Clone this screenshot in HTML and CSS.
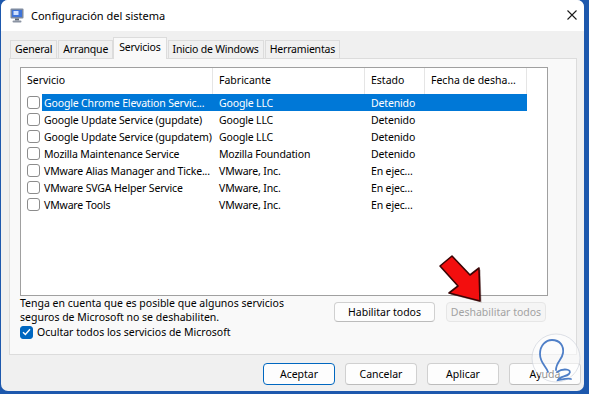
FILE: index.html
```html
<!doctype html>
<html>

<head>
  <title>Configuración del sistema</title>
  <meta http-equiv="Content-Type" content="text/html; charset=UTF-8">
  <link rel="stylesheet" href="styles.css">
</head>

<body>
  <div class="window">
    <div class="titlebar">
      <svg class="app-icon" width="14" height="15" viewBox="0 0 14 15">
        <rect x="0.5" y="0.5" width="13" height="10" rx="1" fill="#7d8aa0" />
        <rect x="2" y="2" width="10" height="7" fill="#3f74d8" />
        <rect x="3.5" y="3" width="5" height="4" fill="#cfe0ff" />
        <rect x="5" y="10.5" width="4" height="2" fill="#5d6778" />
        <rect x="2.5" y="12.5" width="9" height="2" rx="1" fill="#8b94a3" />
      </svg>
      <span class="title">Configuración del sistema</span>
      <svg class="close" width="10" height="10" viewBox="0 0 10 10">
        <path d="M0.5 0.5 L9.5 9.5 M9.5 0.5 L0.5 9.5" stroke="#1b1b1b" stroke-width="1.1" />
      </svg>
    </div>

    <div class="tabs">
      <div class="tab">General</div>
      <div class="tab">Arranque</div>
      <div class="tab active">Servicios</div>
      <div class="tab">Inicio de Windows</div>
      <div class="tab">Herramientas</div>
    </div>

    <div class="panel">
      <div class="list">
        <div class="list-head">
          <div class="hcell c-first">Servicio</div>
          <div class="hcell c-fab">Fabricante</div>
          <div class="hcell c-est">Estado</div>
          <div class="hcell c-fecha">Fecha de desha...</div>
        </div>
        <div class="row selected">
          <div class="c-chk"><span class="box"></span></div>
          <div class="cell c-srv">Google Chrome Elevation Servic...</div>
          <div class="cell c-fab">Google LLC</div>
          <div class="cell c-est">Detenido</div>
          <div class="cell c-fecha"></div>
        </div>
        <div class="row">
          <div class="c-chk"><span class="box"></span></div>
          <div class="cell c-srv">Google Update Service (gupdate)</div>
          <div class="cell c-fab">Google LLC</div>
          <div class="cell c-est">Detenido</div>
          <div class="cell c-fecha"></div>
        </div>
        <div class="row">
          <div class="c-chk"><span class="box"></span></div>
          <div class="cell c-srv">Google Update Service (gupdatem)</div>
          <div class="cell c-fab">Google LLC</div>
          <div class="cell c-est">Detenido</div>
          <div class="cell c-fecha"></div>
        </div>
        <div class="row">
          <div class="c-chk"><span class="box"></span></div>
          <div class="cell c-srv">Mozilla Maintenance Service</div>
          <div class="cell c-fab">Mozilla Foundation</div>
          <div class="cell c-est">Detenido</div>
          <div class="cell c-fecha"></div>
        </div>
        <div class="row">
          <div class="c-chk"><span class="box"></span></div>
          <div class="cell c-srv">VMware Alias Manager and Ticke...</div>
          <div class="cell c-fab">VMware, Inc.</div>
          <div class="cell c-est">En ejec...</div>
          <div class="cell c-fecha"></div>
        </div>
        <div class="row">
          <div class="c-chk"><span class="box"></span></div>
          <div class="cell c-srv">VMware SVGA Helper Service</div>
          <div class="cell c-fab">VMware, Inc.</div>
          <div class="cell c-est">En ejec...</div>
          <div class="cell c-fecha"></div>
        </div>
        <div class="row">
          <div class="c-chk"><span class="box"></span></div>
          <div class="cell c-srv">VMware Tools</div>
          <div class="cell c-fab">VMware, Inc.</div>
          <div class="cell c-est">En ejec...</div>
          <div class="cell c-fecha"></div>
        </div>
      </div>

      <div class="below">
        <div class="notes">
          <p>Tenga en cuenta que es posible que algunos servicios<br>seguros de Microsoft no se deshabiliten.</p>
          <label class="hide-ms">
            <span class="box checked">
              <svg width="9" height="8" viewBox="0 0 9 8">
                <path d="M1 4.2 L3.4 6.5 L8 1.3" fill="none" stroke="#fff" stroke-width="1.4" />
              </svg>
            </span>
            Ocultar todos los servicios de Microsoft
          </label>
        </div>
        <div class="actions">
          <button class="btn wide">Habilitar todos</button>
          <button class="btn wide" disabled>Deshabilitar todos</button>
        </div>
      </div>
    </div>

    <div class="footer">
      <button class="btn default">Aceptar</button>
      <button class="btn">Cancelar</button>
      <button class="btn">Aplicar</button>
      <button class="btn">Ayuda</button>
    </div>
  </div>

  <!-- red pointer drawn over the dialog -->
  <svg class="arrow" width="52" height="58" viewBox="0 0 52 58">
    <polygon points="16,6 34,25 43,18 44,51 13,43 22,36 4,16" fill="#2a0000" transform="translate(1.5,1.5)" opacity="0.35" />
    <polygon points="16,6 34,25 43,18 44,51 13,43 22,36 4,16" fill="#f30e0e" stroke="#3a0505" stroke-width="1.6" stroke-linejoin="round" />
  </svg>

  <!-- watermark -->
  <svg class="mark" width="50" height="52" viewBox="0 0 50 52">
    <circle cx="25" cy="26" r="24" fill="rgba(255,255,255,0.55)" stroke="rgba(200,205,215,0.6)" stroke-width="1" />
    <path d="M17 40 C15 34 9 31 9 22 C9 13 15 8 21 8 C29 8 33 14 32 21 C31 28 25 30 25 38" fill="none" stroke="#4f7fc7" stroke-width="1.8" stroke-linecap="round" />
    <path d="M26 40 C32 36 42 37 38 42 C35 45 29 44 27 48 C33 47 37 46 40 47" fill="none" stroke="#4f7fc7" stroke-width="1.8" stroke-linecap="round" />
  </svg>
</body>

</html>
```

FILE: styles.css
```css
html,
body {
  margin: 0;
  height: 100%;
  background-color: #1d58ad;
  font-family: 'Noto Sans', sans-serif;
  font-size: 10.5px;
  color: #000;
}

.window {
  position: relative;
  margin-left: 1px;
  width: 583px;
  height: 391px;
  background-color: #f0f0f0;
  border-radius: 7px;
  overflow: hidden;
  display: flex;
  flex-direction: column;
}

.titlebar {
  height: 31px;
  background-color: #fff;
  display: flex;
  align-items: center;
  padding: 0 0 0 9px;
  box-sizing: border-box;
}

.app-icon {
  margin-right: 7px;
}

.title {
  font-size: 11px;
  flex: 1;
}

.close {
  margin-right: 7px;
  margin-top: -1px;
}

.tabs {
  height: 27px;
  display: flex;
  align-items: flex-end;
  padding-left: 9px;
  box-sizing: border-box;
  letter-spacing: -0.2px;
}

.tab {
  height: 18px;
  line-height: 17px;
  padding: 0 4px;
  margin-right: 1px;
  background-color: #f0f0f0;
  border: 1px solid #dcdcdc;
  border-bottom: none;
  box-sizing: border-box;
}

.tab.active {
  height: 22px;
  line-height: 19px;
  margin: 0 1px -1px -1px;
  padding: 0 5px;
  background-color: #f9f9f9;
  position: relative;
  z-index: 1;
}

.panel {
  height: 297px;
  margin: 0 7px 0 8px;
  background-color: #f9f9f9;
  border: 1px solid #dcdcdc;
  box-sizing: border-box;
  padding: 8px 28px 0 10px;
}

.list {
  height: 229px;
  background-color: #fff;
  border: 1px solid #a0a0a0;
  box-sizing: border-box;
}

.list-head {
  height: 26px;
  display: flex;
}

.hcell {
  line-height: 25px;
  padding-left: 6px;
  border-right: 1px solid #e5e5e5;
  box-sizing: border-box;
  white-space: nowrap;
  overflow: hidden;
}

.row {
  height: 17px;
  display: flex;
  line-height: 18px;
}

.cell {
  padding-left: 6px;
  white-space: nowrap;
  overflow: hidden;
  box-sizing: border-box;
  letter-spacing: -0.15px;
}

.c-chk {
  width: 21px;
  display: flex;
  align-items: center;
  padding-left: 6px;
  box-sizing: border-box;
}

.c-first {
  width: 192px;
}

.c-srv {
  width: 171px;
  padding-left: 2px;
}

.c-fab {
  width: 152px;
}

.c-est {
  width: 60px;
}

.c-fecha {
  width: 102px;
}

.row.selected .cell {
  background-color: #0078d7;
  color: #fff;
}

.box {
  width: 13px;
  height: 13px;
  border: 1px solid #8c8c8c;
  border-radius: 3px;
  background-color: #fff;
  box-sizing: border-box;
  display: inline-flex;
  align-items: center;
  justify-content: center;
}

.box.checked {
  background-color: #0067c0;
  border-color: #0067c0;
}

.below {
  display: flex;
  justify-content: space-between;
}

.notes p {
  margin: 0;
  line-height: 14px;
}

.hide-ms {
  display: flex;
  align-items: center;
  gap: 4px;
  margin-top: -1px;
  height: 18px;
}

.actions {
  display: flex;
  gap: 11px;
  padding-top: 6px;
  padding-right: 2px;
}

.btn {
  font-family: 'Noto Sans', sans-serif;
  font-size: 10.5px;
  color: #000;
  width: 72px;
  height: 22px;
  padding: 0;
  background-color: #fdfdfd;
  border: 1px solid #d0d0d0;
  border-bottom-color: #bcbcbc;
  border-radius: 4px;
}

.btn.wide {
  width: 101px;
  height: 20px;
}

.btn:disabled {
  width: 100px;
  color: #a2a2a2;
  background-color: #f5f5f5;
  border-color: #e6e6e6;
}

.btn.default {
  border: 1px solid #0067c0;
}

.footer {
  flex: 1;
  display: flex;
  justify-content: flex-end;
  align-items: flex-start;
  gap: 10px;
  padding: 8px 3px 0 0;
}

.arrow {
  position: absolute;
  left: 436px;
  top: 250px;
}

.mark {
  position: absolute;
  left: 531px;
  top: 332px;
}
```
